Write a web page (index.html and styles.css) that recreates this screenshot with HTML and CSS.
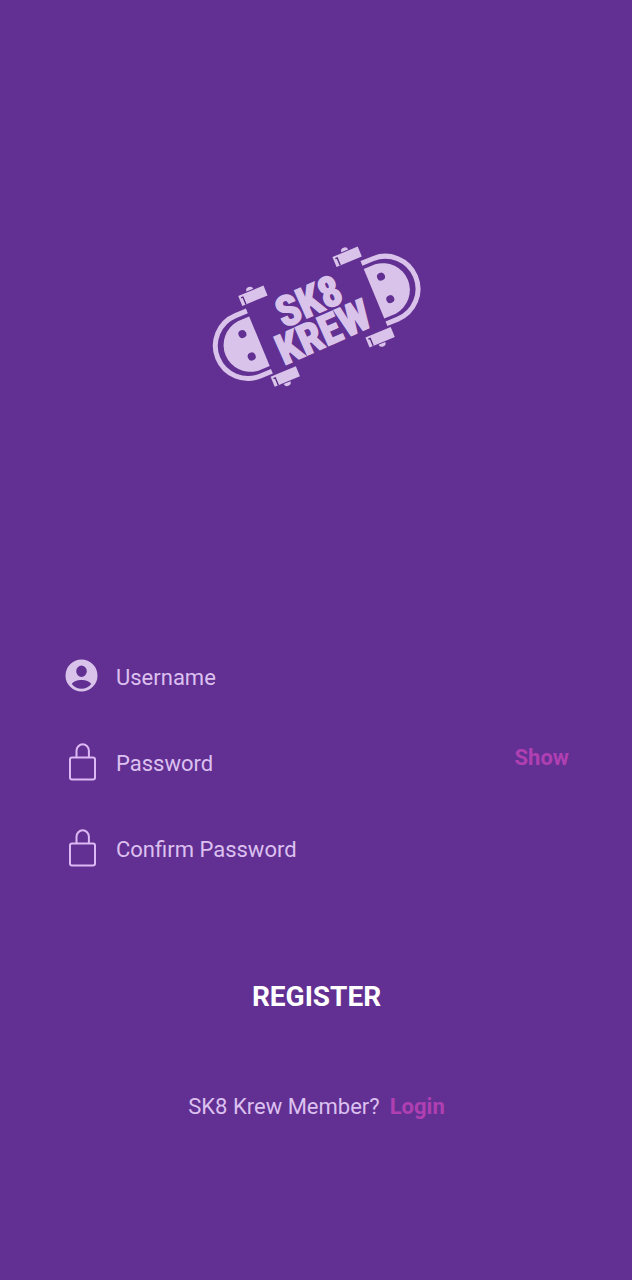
FILE: index.html
```html
<!DOCTYPE html>
<html lang="en">
<head>
<meta charset="utf-8">
<meta name="viewport" content="width=device-width, initial-scale=1">
<title>SK8 Krew – Register</title>
<link rel="stylesheet" href="styles.css">
</head>
<body>
<main class="page">
  <svg class="logo" viewBox="0 0 702 480" role="img" aria-label="SK8 Krew">
    <defs>
      <g id="end">
        <path class="fill" d="M-186-80H-223A82 81 0 0 0-223 81H-186Z"/>
        <path class="rail" d="M-186-98H-223A98 98 0 0 0-223 98H-186"/>
        <circle class="hole" cx="-225" cy="-39" r="12"/>
        <circle class="hole" cx="-225" cy="34" r="12"/>
      </g>
      <g id="wheel">
        <path class="fill" d="M-41-16H41V16H-41Z"/>
        <path class="slot" d="M-35-8H-29V16"/>
      </g>
      <path id="nut" class="fill" d="M-11 0A11 10 0 0 1 11 0Z"/>
    </defs>
    <g transform="translate(350 247) rotate(-22.5)">
      <use href="#end"/>
      <use href="#end" transform="scale(-1 1)"/>
      <use href="#wheel" x="-152" y="-133"/>
      <use href="#wheel" x="154" y="-133"/>
      <use href="#wheel" x="-155" y="128"/>
      <use href="#wheel" x="153" y="128"/>
      <use href="#nut" x="-154" y="-152"/>
      <use href="#nut" x="154" y="-152"/>
      <use href="#nut" transform="translate(-157 147) scale(1 -1)"/>
      <use href="#nut" transform="translate(151 147) scale(1 -1)"/>
    </g>
    <g class="name" transform="translate(350 247) rotate(-24)">
      <text x="-2" y="-10">SK8</text>
      <text x="0" y="92">KREW</text>
    </g>
  </svg>

  <form class="form">
    <div class="row">
      <label class="icon" for="username" aria-label="Username">
        <svg viewBox="0 0 36 36"><path class="fill" fill-rule="evenodd" d="M17.500 1.500a16 16 0 1 0 0 32a16 16 0 0 0 0-32ZM17.500 7.500a5.300 5.700 0 1 1 0 11.400a5.300 5.700 0 0 1 0-11.400ZM7.800 26C11 20.800 24 20.800 27.200 26C23 32.400 12 32.400 7.800 26Z"/></svg>
      </label>
      <input class="field" id="username" type="text" placeholder="Username">
    </div>
    <div class="row">
      <label class="icon" for="password" aria-label="Password">
        <svg viewBox="0 0 36 40"><path class="line" d="M8 15.500h21a2 2 0 0 1 2 2v18a2 2 0 0 1-2 2h-21a2 2 0 0 1-2-2v-18a2 2 0 0 1 2-2ZM12.500 15.500V8.800a6.200 6.500 0 0 1 12.400 0V15.500"/></svg>
      </label>
      <input class="field" id="password" type="password" placeholder="Password">
      <button class="show" type="button">Show</button>
    </div>
    <div class="row">
      <label class="icon" for="confirm" aria-label="Confirm Password">
        <svg viewBox="0 0 36 40"><path class="line" d="M8 15.500h21a2 2 0 0 1 2 2v18a2 2 0 0 1-2 2h-21a2 2 0 0 1-2-2v-18a2 2 0 0 1 2-2ZM12.500 15.500V8.800a6.200 6.500 0 0 1 12.400 0V15.500"/></svg>
      </label>
      <input class="field" id="confirm" type="password" placeholder="Confirm Password">
    </div>
    <button class="register" type="submit">REGISTER</button>
  </form>

  <p class="member"><span>SK8 Krew Member?</span><a class="login" href="#login">Login</a></p>
</main>
</body>
</html>
```
FILE: styles.css
```css
* {
  box-sizing: border-box;
}

body {
  margin: 0;
  min-height: 100vh;
  background: #623092;
  color: #dcc0f0;
  font-family: Roboto, "Liberation Sans", sans-serif;
  font-size: 22px;
  line-height: 30px;
}

.page {
  display: flex;
  flex-direction: column;
  align-items: center;
  padding: 235px 63px 60px 64px;
}

.logo {
  width: 234px;
  height: 160px;
}

.fill {
  fill: #d9c3ea;
}

.rail {
  fill: none;
  stroke: #d9c3ea;
  stroke-width: 15;
}

.hole {
  fill: #623092;
}

.slot {
  fill: none;
  stroke: #54287f;
  stroke-width: 4;
}

.name {
  fill: #d9c3ea;
  stroke: #d9c3ea;
  stroke-width: 5;
  font-family: "Liberation Sans Narrow", "Roboto Condensed", Roboto, sans-serif;
  font-size: 126px;
  font-weight: 700;
  text-anchor: middle;
}

.form {
  display: flex;
  flex-direction: column;
  align-self: stretch;
  margin-top: 238px;
}

.row {
  display: flex;
  align-items: center;
  gap: 16px;
  height: 86px;
}

.icon {
  display: flex;
  flex: none;
  width: 36px;
}

.icon svg {
  width: 100%;
}

.line {
  fill: none;
  stroke: #dcb8f4;
  stroke-width: 2;
}

.field {
  flex: 1;
  min-width: 0;
  height: 48px;
  padding: 2px 0 0;
  border: 0;
  outline: 0;
  background: transparent;
  color: inherit;
  font: inherit;
}

.field::placeholder {
  color: #dcc0f0;
  opacity: 1;
}

.show,
.register {
  border: 0;
  background: transparent;
  font: inherit;
  font-weight: 700;
  cursor: pointer;
}

.show {
  padding: 0 0 8px;
  color: #b03fb2;
}

.register {
  align-self: center;
  margin-top: 77px;
  padding: 14px 24px;
  color: #fff;
  font-size: 28px;
}

.member {
  display: flex;
  gap: 10px;
  margin: 66px 0 0;
}

.login {
  color: #b03fb2;
  font-weight: 700;
  text-decoration: none;
}
```
